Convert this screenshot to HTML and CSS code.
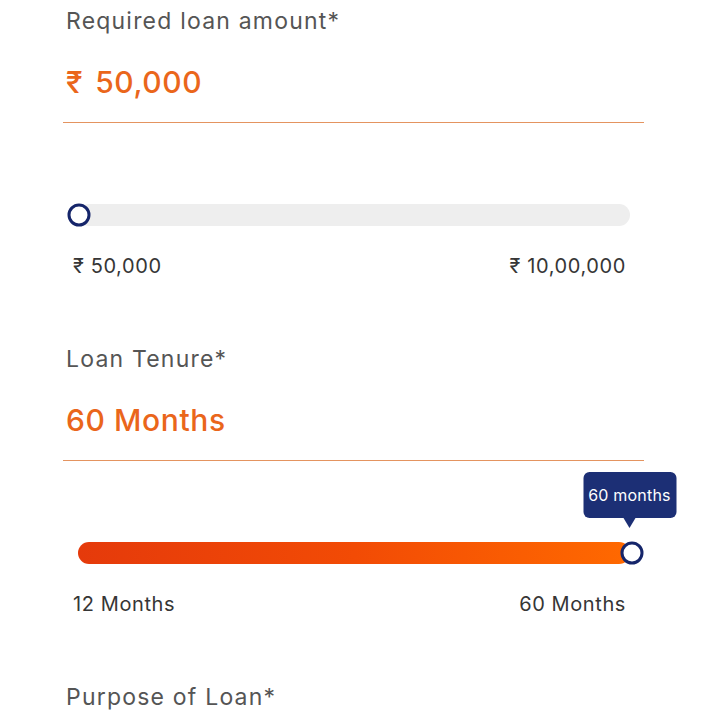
FILE: index.html
```html
<!DOCTYPE html>
<html lang="en">
<head>
<meta charset="utf-8">
<title>Loan form</title>
<link rel="stylesheet" href="styles.css">
</head>
<body>
<main class="form">
  <section class="field">
    <div class="label">Required loan amount*</div>
    <div class="value"><span class="cur">₹</span>50,000</div>
    <div class="rule"></div>
    <div class="slider">
      <div class="track"></div>
      <span class="thumb thumb-start"></span>
    </div>
    <div class="range"><span>₹ 50,000</span><span>₹ 10,00,000</span></div>
  </section>

  <section class="field">
    <div class="label">Loan Tenure*</div>
    <div class="value">60 Months</div>
    <div class="rule"></div>
    <div class="slider">
      <div class="track track-filled"></div>
      <span class="thumb thumb-end"></span>
      <div class="tooltip">60 months</div>
    </div>
    <div class="range"><span>12 Months</span><span>60 Months</span></div>
  </section>

  <section class="field">
    <div class="label">Purpose of Loan*</div>
  </section>
</main>
</body>
</html>
```

FILE: styles.css
```css
html, body {
  margin: 0;
  padding: 0;
  background: #ffffff;
}

body {
  font-family: Inter, "Liberation Sans", Arial, sans-serif;
  color: #333;
}

.form {
  width: 581px;
  padding: 8px 0 0 63px;
}

.field + .field {
  margin-top: 69px;
}

.label {
  font-size: 23px;
  line-height: 27px;
  letter-spacing: 1.2px;
  color: #555555;
  padding-left: 3px;
}

.value {
  margin-top: 29px;
  padding-left: 3px;
  font-weight: 500;
  font-size: 30px;
  line-height: 36px;
  letter-spacing: 0.6px;
  color: #ea661b;
}

.cur {
  margin-right: 12px;
}

.rule {
  height: 1px;
  margin-top: 22px;
  background: #e49460;
}

.slider {
  position: relative;
  width: 552px;
  height: 22px;
  margin: 81px 0 0 15px;
}

.track {
  height: 22px;
  border-radius: 11px;
  background: #eeeeee;
}

.track-filled {
  background: linear-gradient(90deg, #e53a0b 0%, #f24b05 50%, #ff6900 100%);
}

.thumb {
  position: absolute;
  top: 50%;
  width: 23px;
  height: 23px;
  box-sizing: border-box;
  border: 3px solid #15256a;
  border-radius: 50%;
  background: #ffffff;
  transform: translate(-50%, -50%);
}

.thumb-start {
  left: 1px;
}

.thumb-end {
  left: 554px;
}

.tooltip {
  position: absolute;
  left: 551.5px;
  bottom: calc(100% + 24px);
  transform: translateX(-50%);
  width: 93px;
  height: 46px;
  box-sizing: border-box;
  border-radius: 6px;
  background: #1c2f75;
  color: #ffffff;
  font-size: 16px;
  letter-spacing: 0.2px;
  line-height: 46px;
  text-align: center;
  white-space: nowrap;
}

.tooltip::after {
  content: "";
  position: absolute;
  left: 50%;
  bottom: -10px;
  transform: translateX(-50%);
  border-top: 10px solid #1c2f75;
  border-left: 6px solid transparent;
  border-right: 6px solid transparent;
}

.range {
  display: flex;
  justify-content: space-between;
  margin: 29px 18px 0 10px;
  font-size: 20px;
  line-height: 22px;
  letter-spacing: 0.6px;
  color: #363636;
}
```
